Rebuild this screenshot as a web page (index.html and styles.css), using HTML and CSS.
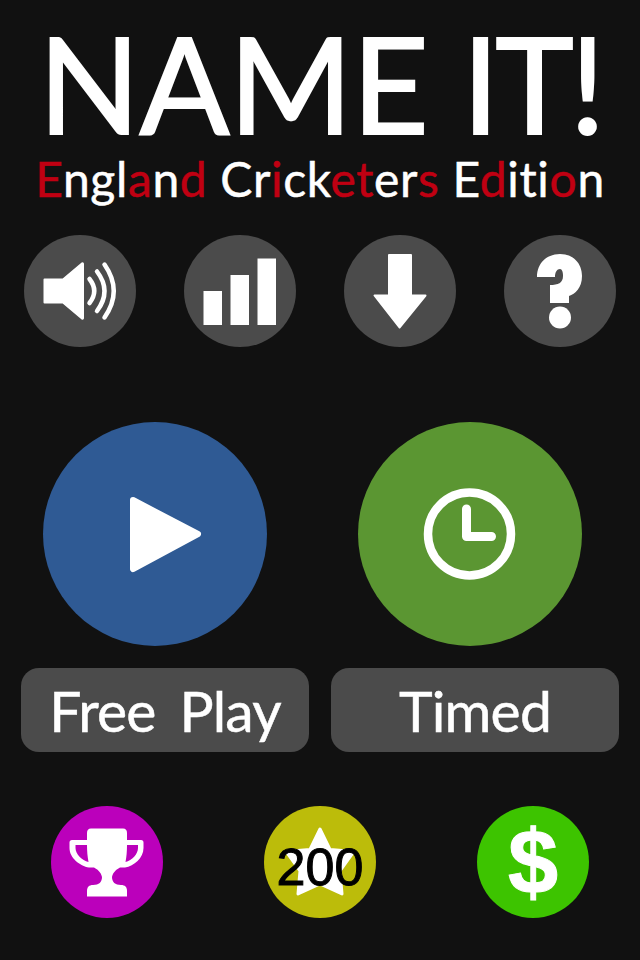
FILE: index.html
```html
<!DOCTYPE html>
<html lang="en">
<head>
<meta charset="utf-8">
<title>Name It!</title>
<link rel="stylesheet" href="styles.css">
</head>
<body>
<main class="screen">
  <header class="masthead">
    <h1 class="title">NAME <span class="title-tail">IT!</span></h1>
    <p class="subtitle"><span class="red">E</span>ngl<span class="red">a</span>n<span class="red">d</span> Cr<span class="red">i</span>ck<span class="red">et</span>er<span class="red">s</span> E<span class="red">d</span>iti<span class="red">o</span>n</p>
  </header>
  <nav class="tools">
    <button class="disc disc-grey">
      <svg viewBox="0 0 112 112" class="icon"><path class="solid" d="M20.500 44.500H39L58 28.500Q59 28 59 29V83Q59 84 58 83.500L39 67.500H20.500Z"/><path class="wave" d="M65.500 44Q75 56 65.500 68M73 36.500Q88 56 73 76M80.500 29.500Q99 56 80.500 82.500"/></svg>
    </button>
    <button class="disc disc-grey">
      <svg viewBox="0 0 112 112" class="icon"><path class="flat" d="M19.500 56H38V90H19.500ZM46.500 40H65V90H46.500ZM73.500 23.500H92V90H73.500Z"/></svg>
    </button>
    <button class="disc disc-grey">
      <svg viewBox="0 0 112 112" class="icon"><path class="solid" d="M45 20H67V60.500H81.500L55.500 92.500L30.500 60.500H45Z"/></svg>
    </button>
    <button class="disc disc-grey">
      <svg viewBox="0 0 112 112" class="icon"><path class="flat" d="M33 42C33 28 43 19 56 19C69 19 78 28 78 41C78 53 71 59 65 61V68H46V50C54 50 59 48 59 41C59 37 58 34 56 34C53 34 51 37 51 42Z"/><circle class="flat" cx="56" cy="82.500" r="11"/></svg>
    </button>
  </nav>
  <section class="modes">
    <div class="mode mode-free">
      <button class="disc-big disc-blue">
        <svg viewBox="0 0 224 224" class="icon"><path class="play" d="M90 78L155 112L90 147Z"/></svg>
      </button>
      <button class="label">Free Play</button>
    </div>
    <div class="mode mode-timed">
      <button class="disc-big disc-green">
        <svg viewBox="0 0 224 224" class="icon"><circle class="ring" cx="111.500" cy="112" r="41.500"/><path class="hand" d="M108.500 87V114.500H133.500"/></svg>
      </button>
      <button class="label">Timed</button>
    </div>
  </section>
  <footer class="extras">
    <button class="disc disc-purple">
      <svg viewBox="0 0 112 112" class="icon"><path class="flat" fill-rule="evenodd" d="M40 22.500H72Q76 22.500 76 27V34H90Q92.500 34 92.500 36.500V42C92.500 52 83 60 74 61.500H69C66 63 62 66 61 71C61 76 64 79 70 79C74 79 76 81 76 85V90.500H36V85C36 81 38 79 42 79C48 79 51 76 51 71C50 66 46 63 43 61.500H38C29 60 18.500 52 18.500 42V36.500Q18.500 34 21 34H36V27Q36 22.500 40 22.500ZM24.500 39V42C24.500 48 31 54.500 37.500 56C36.500 51 36 45 36 39ZM87 39H76C76 45 75.500 51 74.500 56C81 54.500 87 48 87 42Z"/></svg>
    </button>
    <button class="disc disc-olive">
      <svg viewBox="0 0 112 112" class="icon icon-under"><path class="star" d="M56 23L66 43.500L90 45.500L76 65L78 88L56 78L34 88L36 65L22 45.500L46 43.500Z"/></svg>
      <span class="count">200</span>
    </button>
    <button class="disc disc-lime"><span class="dollar">$</span></button>
  </footer>
</main>
</body>
</html>
```
FILE: styles.css
```css
* { box-sizing: border-box; }
html, body { margin: 0; padding: 0; }
body { background: #111111; color: #fff; font-family: "Lato", "Liberation Sans", sans-serif; }
.screen { width: 640px; height: 960px; overflow: hidden; display: flex; flex-direction: column; }
button { border: 0; padding: 0; margin: 0; color: inherit; font: inherit; }

.masthead { height: 235px; display: flex; flex-direction: column; align-items: center; }
.title { margin: 0; padding-top: 15px; height: 150px; font-size: 133px; line-height: 136px; font-weight: 400; letter-spacing: -0.500px; white-space: nowrap; -webkit-text-stroke: 2px #fff; }
.title-tail { letter-spacing: -4px; }
.subtitle { margin: 0; font-size: 48px; line-height: 58px; letter-spacing: 0.650px; white-space: nowrap; -webkit-text-stroke: 0.500px currentColor; }
.red { color: #c00012; }

.tools { padding: 0 24px; display: flex; justify-content: space-between; }
.disc { width: 112px; height: 112px; border-radius: 50%; position: relative; display: flex; align-items: center; justify-content: center; flex: none; }
.disc-big { width: 224px; height: 224px; border-radius: 50%; display: block; flex: none; }
.icon { display: block; width: 100%; height: 100%; }
.solid { fill: #fff; stroke: #fff; stroke-width: 2; stroke-linejoin: round; }
.flat { fill: #fff; }
.star { fill: #fff; stroke: #fff; stroke-width: 3; stroke-linejoin: round; }
.wave { fill: none; stroke: #fff; stroke-width: 4.500; stroke-linecap: round; }
.play { fill: #fff; stroke: #fff; stroke-width: 6; stroke-linejoin: round; }
.ring { fill: none; stroke: #fff; stroke-width: 8.500; }
.hand { fill: none; stroke: #fff; stroke-width: 9; stroke-linecap: round; stroke-linejoin: round; }

.disc-grey { background: #4b4b4b; }
.disc-blue { background: #2f5a94; }
.disc-green { background: #5b9632; }
.disc-purple { background: #bb00bb; }
.disc-olive { background: #bcbc0a; }
.disc-lime { background: #3dc400; }

.modes { margin-top: 75px; padding: 0 21px; display: flex; justify-content: space-between; }
.mode { width: 288px; display: flex; flex-direction: column; align-items: flex-start; gap: 22px; }
.mode-free .disc-big { margin-left: 22px; }
.mode-timed .disc-big { margin-left: 27px; }
.label { width: 288px; height: 84px; border-radius: 18px; background: #4b4b4b; font-size: 57px; line-height: 76px; letter-spacing: -0.800px; word-spacing: 10px; text-align: center; -webkit-text-stroke: 0.500px #fff; }

.extras { margin-top: 54px; padding: 0 51px; display: flex; justify-content: space-between; }
.icon-under { position: absolute; inset: 0; }
.count { position: relative; top: 5px; font-family: "Liberation Sans", sans-serif; font-size: 52px; line-height: 50px; color: #000; -webkit-text-stroke: 1px #000; }
.dollar { font-family: "Liberation Sans", sans-serif; font-weight: 700; font-size: 90px; line-height: 90px; color: #fff; -webkit-text-stroke: 1px #fff; }
```
